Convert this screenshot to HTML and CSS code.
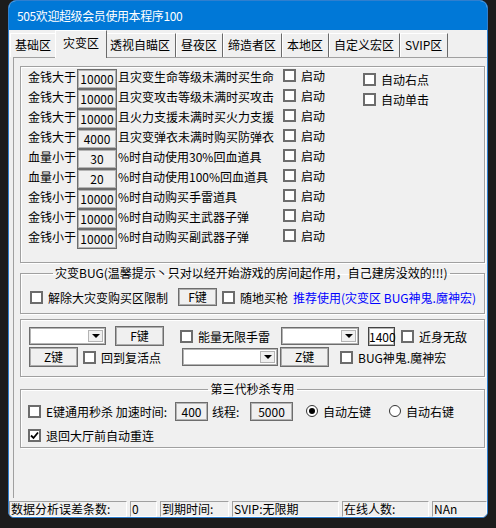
FILE: index.html
```html
<!DOCTYPE html>
<html lang="zh-CN">

<head>
    <meta charset="UTF-8">
    <title>505欢迎超级会员使用本程序100</title>
    <link rel="stylesheet" href="styles.css">
</head>

<body>
    <div class="window">
        <div class="titlebar">505欢迎超级会员使用本程序100</div>
        <div class="tab">
            <span class="tablinks">基础区</span>
            <span class="tablinks active">灾变区</span>
            <span class="tablinks">透视自瞄区</span>
            <span class="tablinks">昼夜区</span>
            <span class="tablinks">缔造者区</span>
            <span class="tablinks">本地区</span>
            <span class="tablinks">自定义宏区</span>
            <span class="tablinks">SVIP区</span>
        </div>
        <div class="tabcontent">
            <!-- 自动购买 -->
            <div class="group buy">
                <div class="col-left">
                    <div class="row"><span class="lbl">金钱大于</span><span class="num">10000</span><span class="desc">且灾变生命等级未满时买生命</span><span class="check"><i class="cb"></i>启动</span></div>
                    <div class="row"><span class="lbl">金钱大于</span><span class="num">10000</span><span class="desc">且灾变攻击等级未满时买攻击</span><span class="check"><i class="cb"></i>启动</span></div>
                    <div class="row"><span class="lbl">金钱大于</span><span class="num">10000</span><span class="desc">且火力支援未满时买火力支援</span><span class="check"><i class="cb"></i>启动</span></div>
                    <div class="row"><span class="lbl">金钱大于</span><span class="num">4000</span><span class="desc">且灾变弹衣未满时购买防弹衣</span><span class="check"><i class="cb"></i>启动</span></div>
                    <div class="row"><span class="lbl">血量小于</span><span class="num">30</span><span class="desc">%时自动使用30%回血道具</span><span class="check"><i class="cb"></i>启动</span></div>
                    <div class="row"><span class="lbl">血量小于</span><span class="num">20</span><span class="desc">%时自动使用100%回血道具</span><span class="check"><i class="cb"></i>启动</span></div>
                    <div class="row"><span class="lbl">金钱小于</span><span class="num">10000</span><span class="desc">%时自动购买手雷道具</span><span class="check"><i class="cb"></i>启动</span></div>
                    <div class="row"><span class="lbl">金钱小于</span><span class="num">10000</span><span class="desc">%时自动购买主武器子弹</span><span class="check"><i class="cb"></i>启动</span></div>
                    <div class="row"><span class="lbl">金钱小于</span><span class="num">10000</span><span class="desc">%时自动购买副武器子弹</span><span class="check"><i class="cb"></i>启动</span></div>
                </div>
                <div class="col-right">
                    <div class="row"><span class="check"><i class="cb"></i>自动右点</span></div>
                    <div class="row"><span class="check"><i class="cb"></i>自动单击</span></div>
                </div>
            </div>

            <!-- 灾变BUG -->
            <fieldset class="group bug">
                <legend>灾变BUG(温馨提示丶只对以经开始游戏的房间起作用，自己建房没效的!!!)</legend>
                <div class="line">
                    <span class="check"><i class="cb"></i>解除大灾变购买区限制</span>
                    <span class="btn btn-f">F键</span>
                    <span class="check"><i class="cb"></i>随地买枪</span>
                    <span class="tip">推荐使用(灾变区 BUG神鬼.魔神宏)</span>
                </div>
            </fieldset>

            <!-- 按键 -->
            <div class="group keys">
                <div class="line">
                    <span class="combo c1"><i class="arrow"></i></span>
                    <span class="btn b1">F键</span>
                    <span class="check k1"><i class="cb"></i>能量无限手雷</span>
                    <span class="combo c2"><i class="arrow"></i></span>
                    <span class="num n1400">1400</span>
                    <span class="check k2"><i class="cb"></i>近身无敌</span>
                </div>
                <div class="line second">
                    <span class="btn b2">Z键</span>
                    <span class="check k3"><i class="cb"></i>回到复活点</span>
                    <span class="combo c3"><i class="arrow"></i></span>
                    <span class="btn b3">Z键</span>
                    <span class="check k4"><i class="cb"></i>BUG神鬼.魔神宏</span>
                </div>
            </div>

            <!-- 第三代秒杀 -->
            <fieldset class="group kill">
                <legend>第三代秒杀专用</legend>
                <div class="line">
                    <span class="check t1"><i class="cb"></i>E键通用秒杀 加速时间:</span>
                    <span class="num n400">400</span>
                    <span class="t2">线程:</span>
                    <span class="num n5000">5000</span>
                    <span class="radio r1"><i class="rb on"></i>自动左键</span>
                    <span class="radio r2"><i class="rb"></i>自动右键</span>
                </div>
                <div class="line second">
                    <span class="check"><i class="cb"><svg width="9" height="9" viewBox="0 0 9 9"><polyline points="1,4.5 3.5,7 8,1.5" fill="none" stroke="#000" stroke-width="1.8"/></svg></i>退回大厅前自动重连</span>
                </div>
            </fieldset>
        </div>
        <div class="statusbar">
            <span class="cell s1">数据分析误差条数:</span>
            <span class="cell s2">0</span>
            <span class="cell s3">到期时间:</span>
            <span class="cell s4">SVIP:无限期</span>
            <span class="cell s5">在线人数:</span>
            <span class="cell s6">NAn</span>
        </div>
    </div>
</body>

</html>
```

FILE: styles.css
```css
body {
    margin: 0;
    padding: 0;
    background: #1c1c1c;
    font-family: "Noto Sans CJK SC", sans-serif;
    font-size: 12px;
    color: #000;
}

.window {
    width: 480px;
    height: 518px;
    margin-left: 8px;
    box-sizing: border-box;
    border: 1px solid #2f7fcf;
    border-radius: 8px 8px 6px 6px;
    background: #f0f0f0;
    overflow: hidden;
    display: flex;
    flex-direction: column;
}

.titlebar {
    height: 29px;
    line-height: 29px;
    padding-left: 8px;
    background: #0078d7;
    color: #fff;
    font-size: 12px;
    letter-spacing: -0.4px;
}

/* Tab */
.tab {
    height: 27px;
    display: flex;
    align-items: flex-end;
    padding-left: 1px;
}

.tablinks {
    height: 24px;
    line-height: 22px;
    padding: 0 5px 0 4px;
    box-sizing: border-box;
    border-top: 1px solid #fff;
    border-left: 1px solid #fff;
    border-right: 1px solid #6a6a6a;
    white-space: nowrap;
}

.tablinks.active {
    height: 28px;
    margin: 0 -2px -1px;
    padding: 0 7px;
    line-height: 24px;
    background: #f0f0f0;
    position: relative;
    z-index: 1;
}

.tabcontent {
    flex: 1;
    margin: 0 0 3px 4px;
    padding: 8px 2px 0 6px;
    border-top: 1px solid #a0a0a0;
    border-left: 1px solid #a0a0a0;
}

.group {
    margin: 0;
    border: 1px solid #a0a0a0;
    box-shadow: inset 1px 1px 0 #fff, 1px 1px 0 #fff;
}

fieldset.group {
    padding: 0;
    min-width: 0;
}

legend {
    padding: 0 2px;
    line-height: 14px;
}

.check {
    display: flex;
    align-items: center;
    height: 13px;
    line-height: 13px;
    white-space: nowrap;
}

.cb {
    width: 13px;
    height: 13px;
    box-sizing: border-box;
    border: 2px solid #6c6c6c;
    background: #fff;
    margin-right: 5px;
    display: flex;
    align-items: center;
    justify-content: center;
    flex: none;
}

.num {
    height: 20px;
    box-sizing: border-box;
    border: 1px solid #6d6d6d;
    box-shadow: inset 0 0 0 1px #b4b4b4;
    text-align: center;
    line-height: 17px;
    flex: none;
}

.btn {
    height: 20px;
    box-sizing: border-box;
    border: 1px solid #6d6d6d;
    box-shadow: inset 0 0 0 1px #adadad;
    text-align: center;
    line-height: 18px;
    flex: none;
}

.combo {
    height: 18px;
    box-sizing: border-box;
    border: 1px solid #6d6d6d;
    box-shadow: inset 0 0 0 1px #b4b4b4;
    background: #fff;
    display: flex;
    justify-content: flex-end;
    padding: 2px;
    flex: none;
}

.arrow {
    width: 15px;
    box-sizing: border-box;
    border: 1px solid #b4b4b4;
    background: #f0f0f0;
    display: flex;
    align-items: center;
    justify-content: center;
}

.arrow::after {
    content: "";
    border-left: 4px solid transparent;
    border-right: 4px solid transparent;
    border-top: 4px solid #000;
}

/* 第一组 */
.buy {
    display: flex;
    padding: 2px 0 13px 7px;
}

.col-left {
    width: 335px;
}

.col-right {
    padding-top: 4px;
}

.row {
    display: flex;
    height: 20px;
}

.lbl {
    width: 49px;
    line-height: 15px;
}

.buy .num {
    width: 40px;
}

.desc {
    width: 165px;
    margin-left: 1px;
    line-height: 15px;
    white-space: nowrap;
}

/* 第二组 */
.bug {
    margin-top: 3px;
}

.bug legend {
    margin-left: 32px;
}

.line {
    display: flex;
    align-items: center;
}

.bug .line {
    margin: 8px 0 7px 9px;
    height: 18px;
}

.btn-f {
    width: 39px;
    height: 18px;
    line-height: 16px;
    margin: 0 5px 0 10px;
}

.tip {
    margin-left: 5px;
    color: #0000ff;
    white-space: nowrap;
}

/* 第三组 */
.keys {
    margin-top: 5px;
    padding: 6px 0 9px 8px;
}

.keys .line {
    height: 20px;
}

.keys .line.second {
    margin-top: 1px;
}

.c1 {
    width: 77px;
}

.b1 {
    width: 49px;
    margin-left: 9px;
}

.k1 {
    margin-left: 16px;
}

.c2 {
    width: 78px;
    margin-left: 11px;
}

.n1400 {
    width: 27px;
    height: 19px;
    margin-left: 9px;
    background: #fff;
    border-color: #444;
}

.k2 {
    margin-left: 6px;
}

.b2 {
    width: 49px;
}

.k3 {
    margin-left: 5px;
}

.c3 {
    width: 96px;
    margin-left: 21px;
}

.b3 {
    width: 49px;
    margin-left: 2px;
}

.k4 {
    margin-left: 11px;
}

/* 第四组 */
.kill {
    margin-top: 5px;
}

.kill legend {
    margin: 0 auto;
}

.kill .line {
    height: 20px;
    margin: 5px 0 0 7px;
}

.kill .line.second {
    margin: 4px 0 2px 7px;
}

.t1 {
    width: 147px;
    margin-right: 0;
}

.n400 {
    width: 33px;
    height: 19px;
}

.t2 {
    width: 38px;
    margin-left: 4px;
}

.n5000 {
    width: 43px;
    height: 19px;
}

.radio {
    display: flex;
    align-items: center;
    white-space: nowrap;
}

.r1 {
    margin-left: 13px;
}

.r2 {
    margin-left: 18px;
}

.rb {
    width: 12px;
    height: 12px;
    box-sizing: border-box;
    border: 1px solid #333;
    border-radius: 50%;
    background: #fff;
    margin-right: 5px;
    display: flex;
    align-items: center;
    justify-content: center;
}

.rb.on::after {
    content: "";
    width: 6px;
    height: 6px;
    border-radius: 50%;
    background: #000;
}

/* 状态栏 */
.statusbar {
    height: 16px;
    display: flex;
    gap: 3px;
}

.cell {
    box-sizing: border-box;
    height: 16px;
    padding-left: 1px;
    line-height: 14px;
    border: 1px solid;
    border-color: #a0a0a0 #fff #fff #a0a0a0;
    white-space: nowrap;
    overflow: hidden;
}

.s1 { width: 118px; }
.s2 { width: 27px; }
.s3 { width: 69px; }
.s4 { width: 107px; }
.s5 { width: 87px; }
.s6 { width: 55px; }
```
